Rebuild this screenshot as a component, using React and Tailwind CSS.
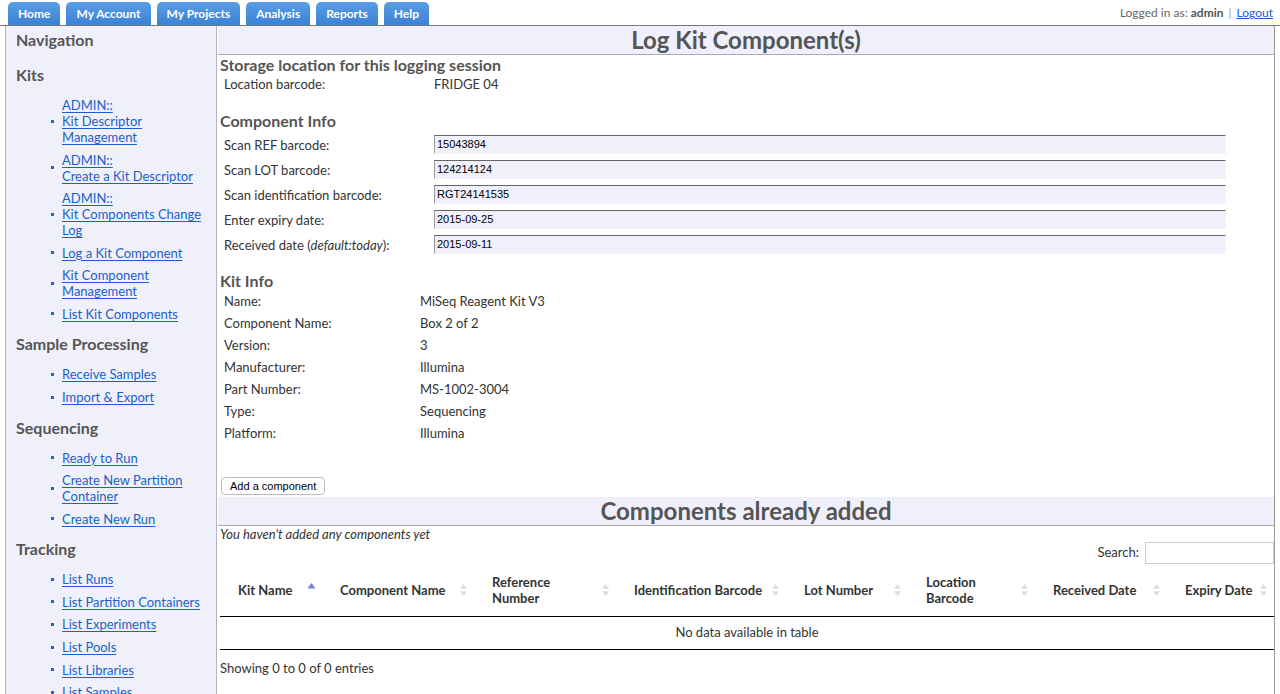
const TABS = ["Home", "My Account", "My Projects", "Analysis", "Reports", "Help"];

const NAV = [
  {
    title: "Kits",
    items: [
      ["ADMIN::", "Kit Descriptor", "Management"],
      ["ADMIN::", "Create a Kit Descriptor"],
      ["ADMIN::", "Kit Components Change", "Log"],
      ["Log a Kit Component"],
      ["Kit Component", "Management"],
      ["List Kit Components"],
    ],
  },
  {
    title: "Sample Processing",
    items: [["Receive Samples"], ["Import & Export"]],
  },
  {
    title: "Sequencing",
    items: [["Ready to Run"], ["Create New Partition", "Container"], ["Create New Run"]],
  },
  {
    title: "Tracking",
    items: [
      ["List Runs"],
      ["List Partition Containers"],
      ["List Experiments"],
      ["List Pools"],
      ["List Libraries"],
      ["List Samples"],
    ],
  },
];

const COMPONENT_FIELDS = [
  ["Scan REF barcode:", "15043894"],
  ["Scan LOT barcode:", "124214124"],
  ["Scan identification barcode:", "RGT24141535"],
  ["Enter expiry date:", "2015-09-25"],
];

const KIT_INFO = [
  ["Name:", "MiSeq Reagent Kit V3"],
  ["Component Name:", "Box 2 of 2"],
  ["Version:", "3"],
  ["Manufacturer:", "Illumina"],
  ["Part Number:", "MS-1002-3004"],
  ["Type:", "Sequencing"],
  ["Platform:", "Illumina"],
];

const COLUMNS = [
  { label: ["Kit Name"], w: "w-[102px]", active: true },
  { label: ["Component Name"], w: "w-[152px]" },
  { label: ["Reference", "Number"], w: "w-[142px]" },
  { label: ["Identification Barcode"], w: "w-[170px]" },
  { label: ["Lot Number"], w: "w-[122px]" },
  { label: ["Location", "Barcode"], w: "w-[127px]" },
  { label: ["Received Date"], w: "w-[132px]" },
  { label: ["Expiry Date"], w: "flex-1" },
];

function SortIcon({ active }) {
  if (active) {
    return (
      <svg width="9" height="14" viewBox="0 0 9 14" aria-hidden>
        <path d="M4.5 2L8.5 7.5H0.5Z" fill="#7b7fdc" />
      </svg>
    );
  }
  return (
    <svg width="9" height="14" viewBox="0 0 9 14" aria-hidden>
      <path d="M4.5 1L8 5.8H1Z" fill="#dcdcdc" />
      <path d="M4.5 13L8 8.2H1Z" fill="#dcdcdc" />
    </svg>
  );
}

function FieldInput({ value }) {
  return (
    <div className="w-[792px] h-[19px] bg-[#f0f0fc] border-t border-l border-t-[#666] border-l-[#999] border-r border-b border-r-[#f4f4f4] border-b-[#f4f4f4] px-[2px] flex items-center text-[11px] text-black font-['Liberation_Sans',Arial,sans-serif]">
      {value}
    </div>
  );
}

function Sidebar() {
  return (
    <aside className="ml-[5px] w-[212px] shrink-0 bg-[#f0f0fa] border-l border-r border-[#b4b4c4] pl-[10px] pt-[4px]">
      <h2 className="text-[16px] font-bold text-[#555] leading-[20px]">Navigation</h2>
      {NAV.map((section, si) => (
        <div key={section.title}>
          <h2 className={`text-[16px] font-bold text-[#555] leading-[20px] ${si === 0 ? "mt-[15px]" : "mt-[12.5px]"}`}>
            {section.title}
          </h2>
          <ul className="mt-[12px] ml-[35px] flex flex-col gap-[6.6px]">
            {section.items.map((lines, i) => (
              <li key={i} className="flex items-center gap-[8px]">
                <span className="w-[3px] h-[3px] bg-[#2a62c8] shrink-0" />
                <a href="#" className="text-[13px] leading-[16px] text-[#1b5fcc] flex flex-col">
                  {lines.map((l, j) => (
                    <span key={j} className="underline decoration-[#1b5fcc] underline-offset-[2px] w-fit">
                      {l}
                    </span>
                  ))}
                </a>
              </li>
            ))}
          </ul>
        </div>
      ))}
    </aside>
  );
}

function TitleBar({ children }) {
  return (
    <div className="h-[29px] shrink-0 bg-[#f0f0fc] border-b border-[#aaa] flex items-center justify-center">
      <h1 className="text-[24px] font-bold text-[#555] leading-none">{children}</h1>
    </div>
  );
}

export default function App() {
  return (
    <div className="w-[1280px] h-[694px] overflow-hidden bg-white font-['Lato',sans-serif] text-[13px] text-[#333]">
      <header className="h-[25px] flex items-end justify-between pl-[8px] pr-[7px]">
        <nav className="flex gap-[6px]">
          {TABS.map((t) => (
            <a
              key={t}
              href="#"
              className="h-[23px] px-[10px] rounded-t-[5px] bg-gradient-to-b from-[#5a9de4] to-[#3b82d6] text-white text-[12px] font-bold flex items-center"
            >
              {t}
            </a>
          ))}
        </nav>
        <div className="self-center pt-[1px] text-[12px] text-[#666]">
          Logged in as: <b className="text-[#555]">admin</b>
          <span className="mx-[5px] text-[#999]">|</span>
          <a href="#" className="text-[#1b5fcc] underline">Logout</a>
        </div>
      </header>

      <div className="flex h-[669px] border-t border-[#777]">
        <Sidebar />

        <main className="flex-1 ml-[1px] mr-[5px] border-r border-[#999] flex flex-col">
          <TitleBar>Log Kit Component(s)</TitleBar>

          <section className="pl-[2px] flex flex-col items-start">
            <h3 className="text-[16px] font-bold text-[#555] leading-[20px]">
              Storage location for this logging session
            </h3>
            <div className="flex pl-[4px] h-[20px] items-center">
              <span className="w-[210px]">Location barcode:</span>
              <span>FRIDGE 04</span>
            </div>

            <h3 className="text-[16px] font-bold text-[#555] leading-[20px] mt-[16px]">Component Info</h3>
            <div className="flex flex-col gap-[6px] mt-[4px]">
              {COMPONENT_FIELDS.map(([label, value]) => (
                <div key={label} className="flex pl-[4px] h-[19px] items-center">
                  <span className="w-[210px] pt-[2px] leading-[17px]">{label}</span>
                  <FieldInput value={value} />
                </div>
              ))}
              <div className="flex pl-[4px] h-[19px] items-center">
                <span className="w-[210px] pt-[2px] leading-[17px]">
                  Received date (<i>default:today</i>):
                </span>
                <FieldInput value="2015-09-11" />
              </div>
            </div>

            <h3 className="text-[16px] font-bold text-[#555] leading-[20px] mt-[17px]">Kit Info</h3>
            <div className="flex flex-col">
              {KIT_INFO.map(([label, value]) => (
                <div key={label} className="flex pl-[4px] h-[22px] items-center">
                  <span className="w-[196px]">{label}</span>
                  <span>{value}</span>
                </div>
              ))}
            </div>

            <button
              type="button"
              className="block mt-[32px] ml-[1px] h-[18px] px-[8px] bg-white border border-[#bbb] rounded-[4px] text-[11px] leading-none text-black font-['Liberation_Sans',Arial,sans-serif]"
            >
              Add a component
            </button>
          </section>

          <div className="mt-[2px]">
            <TitleBar>Components already added</TitleBar>
          </div>

          <section className="pl-[2px]">
            <p className="italic leading-[15px] mt-[1px]">You haven't added any components yet</p>
            <div className="flex justify-end items-center gap-[6px]">
              <span>Search:</span>
              <div className="w-[129px] h-[22px] border border-[#ccc] bg-white" />
            </div>

            <div className="flex h-[47px] items-center pb-[6px] border-b border-black mt-[6px] font-bold">
              {COLUMNS.map((c) => (
                <div key={c.label.join(" ")} className={`${c.w} h-full flex items-center justify-between pl-[18px] pr-[6px]`}>
                  <span className="leading-[16px] flex flex-col">
                    {c.label.map((l) => (
                      <span key={l}>{l}</span>
                    ))}
                  </span>
                  <span className={c.active ? "self-start mt-[11px]" : ""}>
                    <SortIcon active={c.active} />
                  </span>
                </div>
              ))}
            </div>
            <div className="h-[33px] flex items-center justify-center border-b border-black">
              No data available in table
            </div>
            <p className="mt-[9px] leading-[18px]">Showing 0 to 0 of 0 entries</p>
          </section>
        </main>
      </div>
    </div>
  );
}
